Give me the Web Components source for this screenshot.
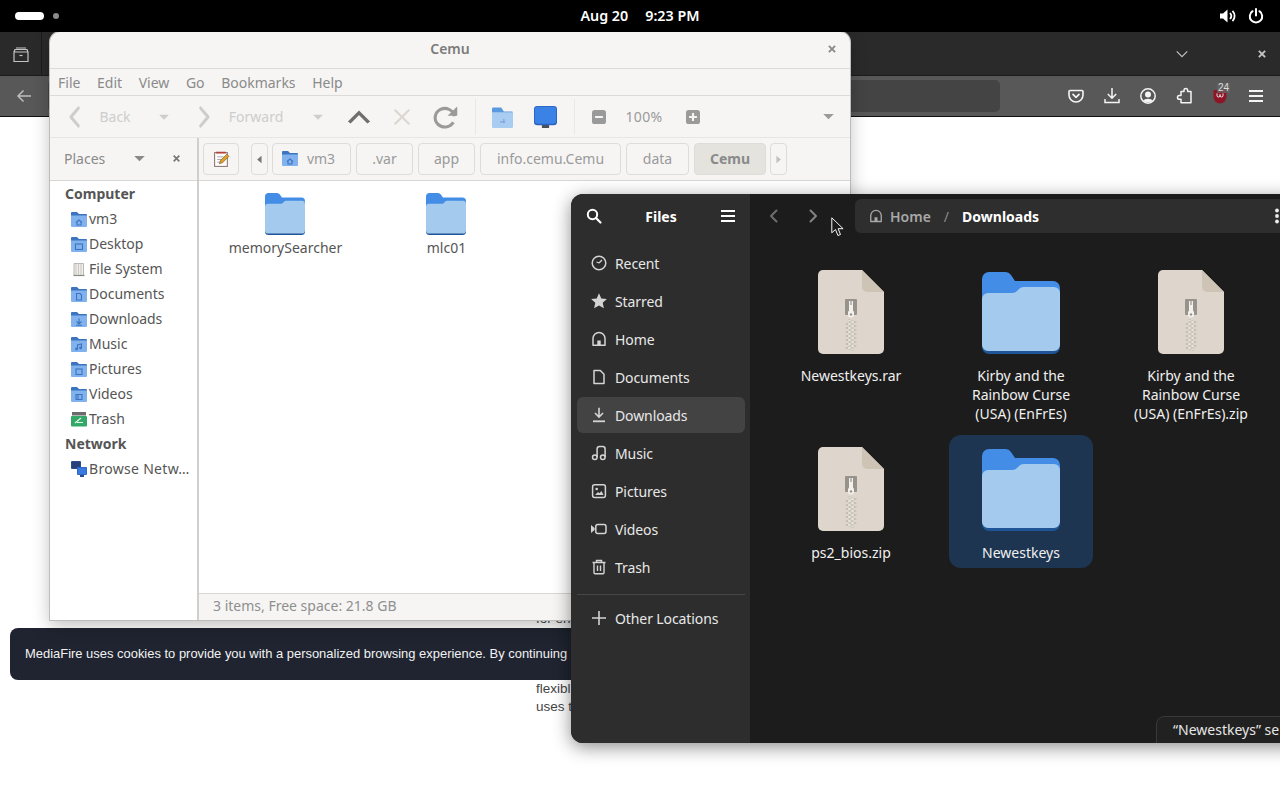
<!DOCTYPE html>
<html lang="en">
<head>
<meta charset="utf-8">
<title>Desktop</title>
<style>
	html, body {
		margin: 0;
		width: 1280px;
		height: 800px;
		overflow: hidden;
		background: #fff;
	}
	body {
		position: relative;
		font-family: "Noto Sans", "Open Sans", sans-serif;
	}
	gnome-topbar { position: absolute; left: 0; top: 0; z-index: 5; }
	browser-window { position: absolute; left: 0; top: 32px; z-index: 1; }
	caja-window { position: absolute; left: 50px; top: 32px; z-index: 2; }
	files-window { position: absolute; left: 571px; top: 194px; z-index: 3; }
	mouse-cursor { position: absolute; left: 831px; top: 217px; z-index: 4; }
</style>
</head>
<body>
	<gnome-topbar></gnome-topbar>

	<browser-window>
		<page-copy></page-copy>
		<cookie-banner>MediaFire uses cookies to provide you with a personalized browsing experience. By continuing</cookie-banner>
	</browser-window>

	<caja-window>
		<caja-place slot="places" head>Computer</caja-place>
		<caja-place slot="places" icon="c-home">vm3</caja-place>
		<caja-place slot="places" icon="c-desktop">Desktop</caja-place>
		<caja-place slot="places" icon="c-disk">File System</caja-place>
		<caja-place slot="places" icon="c-docs">Documents</caja-place>
		<caja-place slot="places" icon="c-down">Downloads</caja-place>
		<caja-place slot="places" icon="c-music">Music</caja-place>
		<caja-place slot="places" icon="c-pics">Pictures</caja-place>
		<caja-place slot="places" icon="c-video">Videos</caja-place>
		<caja-place slot="places" icon="c-trash">Trash</caja-place>
		<caja-place slot="places" head>Network</caja-place>
		<caja-place slot="places" icon="c-net" style="letter-spacing:.3px">Browse Netw…</caja-place>

		<path-crumb slot="crumbs" width="79" icon="c-home">vm3</path-crumb>
		<path-crumb slot="crumbs" width="57">.var</path-crumb>
		<path-crumb slot="crumbs" width="57">app</path-crumb>
		<path-crumb slot="crumbs" width="141">info.cemu.Cemu</path-crumb>
		<path-crumb slot="crumbs" width="63">data</path-crumb>
		<path-crumb slot="crumbs" width="72" active>Cemu</path-crumb>

		<caja-tile slot="files">memorySearcher</caja-tile>
		<caja-tile slot="files">mlc01</caja-tile>
	</caja-window>

	<files-window>
		<nav-row slot="nav" icon="recent">Recent</nav-row>
		<nav-row slot="nav" icon="star">Starred</nav-row>
		<nav-row slot="nav" icon="home">Home</nav-row>
		<nav-row slot="nav" icon="doc">Documents</nav-row>
		<nav-row slot="nav" icon="download" active>Downloads</nav-row>
		<nav-row slot="nav" icon="music">Music</nav-row>
		<nav-row slot="nav" icon="picture">Pictures</nav-row>
		<nav-row slot="nav" icon="video">Videos</nav-row>
		<nav-row slot="nav" icon="trash">Trash</nav-row>
		<nav-row slot="other" icon="plus">Other Locations</nav-row>

		<file-tile slot="files" kind="zip">Newestkeys.rar</file-tile>
		<file-tile slot="files" kind="folder">Kirby and the Rainbow Curse (USA) (EnFrEs)</file-tile>
		<file-tile slot="files" kind="zip">Kirby and the Rainbow Curse (USA) (EnFrEs).zip</file-tile>
		<file-tile slot="files" kind="zip">ps2_bios.zip</file-tile>
		<file-tile slot="files" kind="folder" selected>Newestkeys</file-tile>
	</files-window>

	<mouse-cursor></mouse-cursor>

<script>
const smallFolder = (emblem) => `
	<path fill="#3d74c0" d="M0 2a1 1 0 0 1 1-1h5l2 2h7a1 1 0 0 1 1 1v3H0z"/>
	<path fill="#82b2ee" d="M0 4.5h16V15a1 1 0 0 1-1 1H1a1 1 0 0 1-1-1z"/>
	<g fill="none" stroke="#3d74c0" stroke-width="1.1">${emblem}</g>`;

const ICONS = {
	search: '<circle cx="6.5" cy="6.5" r="4.7" fill="none" stroke="currentColor" stroke-width="2"/><path d="M10 10l4.5 4.5" stroke="currentColor" stroke-width="2.2" stroke-linecap="round"/>',
	menu: '<path d="M1 3h14M1 8h14M1 13h14" stroke="currentColor" stroke-width="2"/>',
	recent: '<circle cx="8" cy="8" r="6.8" fill="none" stroke="currentColor" stroke-width="1.5"/><path d="M8 8l3-3M8 8L5.5 7" stroke="currentColor" stroke-width="1.3"/>',
	star: '<path fill="currentColor" d="M8 .3l2.3 5.1 5.6.6-4.2 3.7 1.2 5.5L8 12.5l-4.9 2.7 1.2-5.5L.1 6l5.6-.6z"/>',
	home: '<path fill="none" stroke="currentColor" stroke-width="1.5" stroke-linejoin="round" d="M2 14.3V7.5a6 6 0 0 1 12 0v6.8z"/><path fill="currentColor" d="M6.3 14.5V9.5h3.4v5z"/>',
	doc: '<path fill="none" stroke="currentColor" stroke-width="1.5" stroke-linejoin="round" d="M3 1.5h6.3L13 5.3v9.2H3z"/>',
	download: '<path fill="none" stroke="currentColor" stroke-width="1.6" d="M8 .8v9M4 6l4 4 4-4"/><path d="M2 14.3h12" stroke="currentColor" stroke-width="1.8"/>',
	music: '<g fill="none" stroke="currentColor" stroke-width="1.5"><circle cx="3.8" cy="12.3" r="2.3"/><circle cx="11.8" cy="12.3" r="2.3"/><path d="M6.1 12V4a2.5 2.5 0 0 1 2.5-2.5h3A2.5 2.5 0 0 1 14.1 4v8"/></g>',
	picture: '<rect x="1.6" y="1.8" width="12.8" height="12.6" rx="2" fill="none" stroke="currentColor" stroke-width="1.5"/><circle cx="5.7" cy="6" r="1.3" fill="currentColor"/><path fill="currentColor" d="M4 12l3-3 1.5 1.2L10.5 8l2 4z"/>',
	video: '<rect x="4.8" y="3.5" width="10.2" height="9" rx="2" fill="none" stroke="currentColor" stroke-width="1.5"/><path fill="currentColor" d="M0 4v8l3.6-3v-2z"/>',
	trash: '<path fill="none" stroke="currentColor" stroke-width="1.4" d="M1.5 3.5h13M5.5 3.5V1.5h5v2M3 3.5v10.2a1 1 0 0 0 1 1h8a1 1 0 0 0 1-1V3.5M6.5 6.5v5.5M9.5 6.5v5.5"/>',
	plus: '<path d="M8 1v14M1 8h14" stroke="currentColor" stroke-width="1.6"/>',
	'chev-left': '<path fill="none" stroke="currentColor" stroke-width="2" stroke-linecap="round" stroke-linejoin="round" d="M10.5 2.5L5 8l5.5 5.5"/>',
	'chev-right': '<path fill="none" stroke="currentColor" stroke-width="2" stroke-linecap="round" stroke-linejoin="round" d="M5.5 2.5L11 8l-5.5 5.5"/>',
	'chev-up': '<path fill="none" stroke="currentColor" stroke-width="2.2" d="M2 12L8 5l6 7"/>',
	'chev-down': '<path fill="none" stroke="currentColor" stroke-width="1.3" d="M2 5l6 6 6-6"/>',
	close: '<path d="M3 3l10 10M13 3L3 13" stroke="currentColor" stroke-width="3"/>',
	'x-thin': '<path d="M1.5 1.5l13 13M14.5 1.5l-13 13" stroke="currentColor" stroke-width="1.8"/>',
	'tri-down': '<path fill="currentColor" d="M1.5 5h13L8 11.5z"/>',
	'tri-left': '<path fill="currentColor" d="M11 2.5v11L4.5 8z"/>',
	'tri-right': '<path fill="currentColor" d="M5 2.5v11L11.5 8z"/>',
	reload: '<path fill="none" stroke="currentColor" stroke-width="2" d="M13.7 7.5A6.2 6.2 0 1 0 13 11.5"/><path fill="currentColor" d="M9.3 7.2h6.2V1z"/>',
	'square-minus': '<rect x="0" y="0" width="16" height="16" rx="3" fill="currentColor"/><path d="M3.5 8h9" stroke="#f6f5f4" stroke-width="2.4"/>',
	'square-plus': '<rect x="0" y="0" width="16" height="16" rx="3" fill="currentColor"/><path d="M3.5 8h9M8 3.5v9" stroke="#f6f5f4" stroke-width="2.4"/>',
	'tool-folder': '<path fill="#5a98e0" d="M0 2a1 1 0 0 1 1-1h6l2 3h6a1 1 0 0 1 1 1v3H0z"/><path fill="#a9cdf1" d="M0 4.5h16V15a1 1 0 0 1-1 1H1a1 1 0 0 1-1-1z"/><path d="M6 11.5h4M9 9.5v3" stroke="#7ba6dc" stroke-width=".9" fill="none"/>',
	monitor: '<rect x="5.5" y="13.5" width="5" height="2.5" fill="#4a5058"/><rect x="0" y="0" width="16" height="14" rx="2.4" fill="#2a62bd"/><rect x=".6" y=".5" width="14.8" height="12.4" rx="2" fill="#3b82e6"/>',
	edit: '<rect x="1.5" y="1.5" width="12" height="13" fill="#fff" stroke="#8a7770" stroke-width="1"/><path d="M3 1.5h9" stroke="#b3413a" stroke-width="1.6"/><path d="M4 5.5h6M4 8h4M4 10.5h3" stroke="#999" stroke-width=".8"/><path d="M6 12l1-3 6-6 2 2-6 6z" fill="#dfa030" stroke="#7d5a20" stroke-width=".6"/>',
	'c-home': smallFolder('<path d="M5 11.5l3-2.5 3 2.5M6 11v3h4v-3"/>'),
	'c-desktop': smallFolder('<rect x="4.5" y="8" width="7" height="5.5"/>'),
	'c-docs': smallFolder('<path d="M5.5 7.5h3.5l1.5 1.5v5h-5z"/>'),
	'c-down': smallFolder('<path d="M8 7.5v5.5M5.5 10.5L8 13l2.5-2.5M5 14.2h6"/>'),
	'c-music': smallFolder('<path d="M6.5 13V9l4-1v4"/><circle cx="5.6" cy="13" r=".9"/><circle cx="9.6" cy="12" r=".9"/>'),
	'c-pics': smallFolder('<rect x="5" y="8" width="6" height="5.5"/>'),
	'c-video': smallFolder('<path d="M5 8.5h6v5H5zM7 8.5v5"/>'),
	'c-disk': '<path fill="#efeeeb" stroke="#a9a7a2" stroke-width=".8" d="M3 2.5h9.5v12H3z"/><path d="M5 3v11M7.5 3v11M10 3v11" stroke="#c9c7c2" stroke-width="1"/><path d="M2.5 14.5h11" stroke="#8b8a86" stroke-width="1.2"/>',
	'c-trash': '<rect x="1" y="1" width="14" height="3.5" fill="#6b6b6b"/><rect x="0" y="5" width="16" height="10.5" rx="1" fill="#33a866"/><path d="M4 12l6-5M6 11.5h6" stroke="#e8f6ee" stroke-width="1.1"/>',
	'c-net': '<rect x="0" y="0" width="10" height="8" rx="1" fill="#2c4b8c"/><rect x="1" y="1" width="8" height="6" fill="#27407a"/><rect x="6" y="6" width="10" height="8" rx="1" fill="#2e66c8"/><rect x="7" y="7" width="8" height="6" fill="#3a7ae0"/><rect x="9" y="14" width="4" height="2" fill="#2c4b8c"/>',
	'tab-box': '<path fill="none" stroke="currentColor" stroke-width="1.2" d="M1 5h14v9.5H1zM1 5l1-2.5h12L15 5M3 1h10"/><path d="M6.5 8.5h3" stroke="currentColor" stroke-width="1.2"/>',
	back: '<path fill="none" stroke="currentColor" stroke-width="1.5" d="M15 8H2M7.5 2.5L2 8l5.5 5.5"/>',
	pocket: '<path fill="none" stroke="currentColor" stroke-width="1.6" stroke-linejoin="round" d="M2 2.5h12a1 1 0 0 1 1 1V7A7 7 0 0 1 1 7V3.5a1 1 0 0 1 1-1z"/><path fill="none" stroke="currentColor" stroke-width="1.7" stroke-linecap="round" stroke-linejoin="round" d="M5 6.3l3 3 3-3"/>',
	tray: '<path fill="none" stroke="currentColor" stroke-width="1.5" d="M8 0v10M3.8 6L8 10.2 12.2 6M1 11v3.5h14V11"/>',
	account: '<circle cx="8" cy="8" r="7.2" fill="none" stroke="currentColor" stroke-width="1.5"/><circle cx="8" cy="6.4" r="3" fill="currentColor"/><path fill="currentColor" d="M3 12.5a6 4 0 0 1 10 0 7 7 0 0 1-10 0z"/>',
	puzzle: '<path fill="none" stroke="currentColor" stroke-width="1.5" stroke-linejoin="round" d="M6 3.5h2V2.2a1.8 1.8 0 0 1 3.6 0v1.3H15v11.2H5v-3.4H3.4a1.9 1.9 0 0 1 0-3.8H5V3.5z"/>',
	volume: '<path fill="currentColor" d="M0 5.5h3L7.5 1.5v13L3 10.5H0z"/><path fill="none" stroke="currentColor" stroke-width="1.8" d="M10 5a4.5 4.5 0 0 1 0 6M12.5 2.8a7.5 7.5 0 0 1 0 10.4"/>',
	power: '<path fill="none" stroke="currentColor" stroke-width="2" stroke-linecap="round" d="M8 1v6.5M4.6 3.2a6.2 6.2 0 1 0 6.8 0"/>',
	kebab: '<circle cx="8" cy="2.5" r="1.9" fill="currentColor"/><circle cx="8" cy="8" r="1.9" fill="currentColor"/><circle cx="8" cy="13.5" r="1.9" fill="currentColor"/>',
};

class AppIcon extends HTMLElement {
	connectedCallback() {
		if (this.shadowRoot) {
			return;
		}
		const name = this.getAttribute('name');
		const w = this.getAttribute('w') || 16;
		const h = this.getAttribute('h') || w;
		const shadow = this.attachShadow({ mode: 'open' });
		shadow.innerHTML = `
			<style>
				:host { display: inline-flex; flex: none; }
				svg { display: block; overflow: visible; }
			</style>
			<svg width="${w}" height="${h}" viewBox="0 0 16 16" preserveAspectRatio="none" aria-hidden="true">${ICONS[name] || ''}</svg>
		`;
	}
}

class GnomeTopbar extends HTMLElement {
	connectedCallback() {
		const shadow = this.attachShadow({ mode: 'open' });
		shadow.innerHTML = `
			<style>
				:host {
					display: grid;
					grid-template-columns: 1fr auto 1fr;
					align-items: center;
					width: 1280px;
					height: 32px;
					background: #000;
					color: #fff;
					font: 600 14.3px "Noto Sans", sans-serif;
				}
				.left { display: flex; align-items: center; gap: 9px; padding-left: 15px; }
				.pill { width: 29px; height: 8px; border-radius: 4px; background: #fff; }
				.dot { width: 6px; height: 6px; border-radius: 3px; background: #8c8c8c; }
				.clock { display: flex; gap: 17px; padding: 0 0 2px 0; }
				.right { display: flex; justify-content: flex-end; align-items: center; gap: 12px; padding-right: 16px; }
			</style>
			<div class="left"><span class="pill"></span><span class="dot"></span></div>
			<div class="clock"><span>Aug 20</span><span>9:23 PM</span></div>
			<div class="right"><app-icon name="volume"></app-icon><app-icon name="power"></app-icon></div>
		`;
	}
}

class BrowserWindow extends HTMLElement {
	connectedCallback() {
		const shadow = this.attachShadow({ mode: 'open' });
		shadow.innerHTML = `
			<style>
				:host {
					display: flex;
					flex-direction: column;
					width: 1280px;
					height: 768px;
					background: #fff;
				}
				.tabs {
					display: flex;
					align-items: center;
					height: 44px;
					background: #2b2a2b;
					color: #c4c4c4;
					box-sizing: border-box;
					border-bottom: 1px solid #1c1c1c;
				}
				.overview {
					display: flex;
					align-items: center;
					justify-content: center;
					width: 42px;
					height: 100%;
					padding-top: 3px;
					box-sizing: border-box;
					border-right: 1px solid #1c1c1c;
				}
				.fill { flex: 1; }
				.tabs .chev { margin-right: 68px; }
				.tabs .close { margin-right: 13px; }
				.bar {
					display: flex;
					align-items: center;
					height: 41px;
					padding: 0 16px;
					background: #585858;
					color: #f4f4f4;
					box-sizing: border-box;
					border-bottom: 1px solid #111;
				}
				.bar .arrow { color: #bdbdbd; }
				.url {
					flex: 1;
					height: 32px;
					margin: 0 68px 0 16px;
					border-radius: 5px;
					background: #444;
				}
				.actions { display: flex; align-items: center; gap: 20px; }
				.ublock { position: relative; display: block; width: 16px; height: 16px; }
				.badge {
					position: absolute;
					left: 5px;
					top: -5px;
					z-index: 1;
					padding: 0 1px;
					font: 10px/10px "Liberation Sans", sans-serif;
					color: #ddd;
					background: rgba(100,100,100,.75);
				}
				.shield { display: block; overflow: visible; margin-top: 1px; }
				.content { flex: 1; position: relative; }
			</style>
			<div class="tabs">
				<div class="overview"><app-icon name="tab-box"></app-icon></div>
				<div class="fill"></div>
				<app-icon class="chev" name="chev-down" w="14" h="14"></app-icon>
				<app-icon class="close" name="close" w="10" h="10"></app-icon>
			</div>
			<div class="bar">
				<app-icon class="arrow" name="back"></app-icon>
				<div class="url"></div>
				<div class="actions">
					<app-icon name="pocket"></app-icon>
					<app-icon name="tray"></app-icon>
					<app-icon name="account"></app-icon>
					<app-icon name="puzzle"></app-icon>
					<span class="ublock">
						<span class="badge">24</span>
						<svg class="shield" width="16" height="15" viewBox="0 0 16 15" aria-hidden="true">
							<path fill="#8e1526" d="M1.5 1h13v6.5a6.5 7 0 0 1-13 0z"/>
							<path fill="none" stroke="#eee" stroke-width="1" d="M5 4.5v2a1.5 1.5 0 0 0 3 0v-1 1a1.5 1.5 0 0 0 3 0v-2"/>
						</svg>
					</span>
					<app-icon name="menu"></app-icon>
				</div>
			</div>
			<div class="content"><slot></slot></div>
		`;
	}
}

class PageCopy extends HTMLElement {
	connectedCallback() {
		const shadow = this.attachShadow({ mode: 'open' });
		shadow.innerHTML = `
			<style>
				:host {
					display: block;
					padding: 493px 0 0 536px;
					font: 13.5px/18px "Liberation Sans", Arial, sans-serif;
					color: #444;
				}
				p { margin: 0; }
				.next { margin-top: 52px; }
			</style>
			<p>for en</p>
			<p class="next">flexibl</p>
			<p>uses t</p>
		`;
	}
}

class CookieBanner extends HTMLElement {
	connectedCallback() {
		const shadow = this.attachShadow({ mode: 'open' });
		shadow.innerHTML = `
			<style>
				:host {
					position: absolute;
					left: 10px;
					top: 511px;
					display: flex;
					align-items: center;
					box-sizing: border-box;
					width: 600px;
					height: 52px;
					padding: 0 0 2px 15px;
					border-radius: 8px;
					background: #1f2430;
					color: #f2f2f2;
					font: 12.95px "Liberation Sans", Arial, sans-serif;
					white-space: nowrap;
				}
			</style>
			<slot></slot>
		`;
	}
}

class CajaWindow extends HTMLElement {
	connectedCallback() {
		const shadow = this.attachShadow({ mode: 'open' });
		shadow.innerHTML = `
			<style>
				:host {
					display: flex;
					flex-direction: column;
					box-sizing: border-box;
					width: 800px;
					height: 588px;
					border-radius: 10px 10px 0 0;
					background: #f6f5f4;
					box-shadow: 0 0 0 1px #bdbdbb, 0 6px 18px rgba(0,0,0,.25);
					font: 14px "Noto Sans", sans-serif;
					color: #6f6f6f;
					overflow: hidden;
				}
				.title {
					display: grid;
					grid-template-columns: 1fr auto 1fr;
					align-items: center;
					height: 37px;
					flex: none;
					padding-bottom: 3px;
					box-sizing: border-box;
					border-bottom: 1px solid #dcdbd8;
					font-weight: 600;
					color: #7b7b7b;
				}
				.title app-icon { justify-self: end; margin-right: 13px; color: #8a8a8a; }
				.menu {
					display: flex;
					gap: 16.6px;
					align-items: center;
					height: 27px;
					flex: none;
					box-sizing: border-box;
					padding-left: 8px;
					border-bottom: 1px solid #dcdbd8;
					color: #8a8a8a;
				}
				.tools {
					display: grid;
					grid-template-columns: 34px 46px 52px 28px 76px 48px 34px 52px 34px 26px 28px 58px 1px 48px 42px 55px 1fr 24px;
					justify-items: center;
					align-items: center;
					height: 41px;
					flex: none;
					padding: 0 10px 0 8px;
					color: #c2c2c2;
				}
				.sep { width: 1px; height: 36px; background: #e9e8e5; }
				.dim { color: #cdcdcd; }
				.warm { color: #dcd6cf; }
				.mid { color: #9a9a9a; }
				.pct { color: #9a9a9a; letter-spacing: .3px; }
				.dark { color: #6f6f6f; }
				.main { flex: 1; display: flex; min-height: 0; border-top: 1px solid #e7e6e3; }
				.side { width: 147px; flex: none; display: flex; flex-direction: column; border-right: 2px solid #cfcfcd; }
				.places {
					display: flex;
					align-items: center;
					height: 43px;
					flex: none;
					box-sizing: border-box;
					padding: 0 0 2px 14px;
					border-bottom: 1px solid #d8d7d4;
					color: #8a8a8a;
				}
				.places span { width: 69px; }
				.places .cross { margin-left: 26px; color: #777; }
				.tree { flex: 1; background: #fff; }
				.right { flex: 1; display: flex; flex-direction: column; min-width: 0; }
				.crumbs {
					display: flex;
					align-items: center;
					gap: 5px;
					height: 43px;
					flex: none;
					box-sizing: border-box;
					padding-left: 4px;
					border-bottom: 1px solid #d8d7d4;
				}
				.nub {
					display: flex;
					align-items: center;
					justify-content: center;
					box-sizing: border-box;
					width: 17px;
					height: 32px;
					border: 1px solid #dedcd9;
					border-radius: 4px;
					color: #777;
				}
				.nub.end { color: #c0c0c0; margin-left: -1px; }
				.nub.start { margin-right: -1px; }
				.editbtn {
					display: flex;
					align-items: center;
					justify-content: center;
					box-sizing: border-box;
					width: 36px;
					height: 32px;
					margin-right: 7px;
					border: 1px solid #dedcd9;
					border-radius: 4px;
				}
				.view {
					flex: 1;
					display: grid;
					grid-template-columns: repeat(auto-fill, 161px);
					grid-auto-rows: max-content;
					padding: 12px 6px;
					background: #fff;
				}
				.status {
					display: flex;
					align-items: center;
					height: 27px;
					flex: none;
					box-sizing: border-box;
					padding: 0 0 3px 14px;
					border-top: 1px solid #d8d7d4;
					color: #8f8f8f;
				}
			</style>
			<div class="title">
				<span></span><span>Cemu</span>
				<app-icon name="close" w="10" h="10"></app-icon>
			</div>
			<div class="menu"><span>File</span><span>Edit</span><span>View</span><span>Go</span><span>Bookmarks</span><span>Help</span></div>
			<div class="tools">
				<app-icon class="dim" name="chev-left" w="22" h="26"></app-icon>
				<span class="dim">Back</span>
				<app-icon class="dim" name="tri-down" w="12" h="12"></app-icon>
				<app-icon class="dim" name="chev-right" w="22" h="26"></app-icon>
				<span class="dim">Forward</span>
				<app-icon class="dim" name="tri-down" w="12" h="12"></app-icon>
				<app-icon class="dark" name="chev-up" w="26" h="22"></app-icon>
				<app-icon class="warm" name="x-thin" w="18" h="18"></app-icon>
				<app-icon class="mid" name="reload" w="25" h="24"></app-icon>
				<span class="sep"></span>
				<app-icon name="tool-folder" w="21" h="22"></app-icon>
				<app-icon name="monitor" w="23" h="22"></app-icon>
				<span class="sep"></span>
				<app-icon class="mid" name="square-minus" w="14" h="14"></app-icon>
				<span class="pct">100%</span>
				<app-icon class="mid" name="square-plus" w="14" h="14"></app-icon>
				<span></span>
				<app-icon class="mid" name="tri-down" w="13" h="13"></app-icon>
			</div>
			<div class="main">
				<div class="side">
					<div class="places">
						<span>Places</span>
						<app-icon name="tri-down" w="13" h="13"></app-icon>
						<app-icon class="cross" name="close" w="9" h="9"></app-icon>
					</div>
					<div class="tree"><slot name="places"></slot></div>
				</div>
				<div class="right">
					<div class="crumbs">
						<span class="editbtn"><app-icon name="edit" w="17" h="17"></app-icon></span>
						<span class="nub start"><app-icon name="tri-left" w="11" h="11"></app-icon></span>
						<slot name="crumbs"></slot>
						<span class="nub end"><app-icon name="tri-right" w="11" h="11"></app-icon></span>
					</div>
					<div class="view"><slot name="files"></slot></div>
					<div class="status">3 items, Free space: 21.8 GB</div>
				</div>
			</div>
		`;
	}
}

class CajaPlace extends HTMLElement {
	connectedCallback() {
		const icon = this.getAttribute('icon');
		const shadow = this.attachShadow({ mode: 'open' });
		shadow.innerHTML = `
			<style>
				:host {
					display: flex;
					align-items: center;
					gap: 2px;
					height: 25px;
					padding-left: ${icon ? 21 : 15}px;
					color: #555;
					font-weight: ${icon ? 400 : 700};
					white-space: nowrap;
				}
			</style>
			${icon ? `<app-icon name="${icon}"></app-icon>` : ''}
			<slot></slot>
		`;
	}
}

class PathCrumb extends HTMLElement {
	connectedCallback() {
		const icon = this.getAttribute('icon');
		const shadow = this.attachShadow({ mode: 'open' });
		shadow.innerHTML = `
			<style>
				:host {
					display: flex;
					align-items: center;
					justify-content: center;
					gap: 9px;
					box-sizing: border-box;
					width: ${this.getAttribute('width')}px;
					height: 32px;
					padding-right: ${icon ? 6 : 0}px;
					padding-bottom: 2px;
					border: 1px solid #dedcd9;
					border-radius: 4px;
					color: #9a9a9a;
				}
				:host([active]) {
					background: #e4e3de;
					font-weight: 700;
					color: #8a8a8a;
				}
			</style>
			${icon ? `<app-icon name="${icon}"></app-icon>` : ''}
			<slot></slot>
		`;
	}
}

class CajaTile extends HTMLElement {
	connectedCallback() {
		const shadow = this.attachShadow({ mode: 'open' });
		shadow.innerHTML = `
			<style>
				:host {
					display: flex;
					flex-direction: column;
					align-items: center;
					gap: 3px;
					color: #555;
				}
				folder-art { margin-right: 2px; }
			</style>
			<folder-art w="40" h="42"></folder-art>
			<slot></slot>
		`;
	}
}

class FolderArt extends HTMLElement {
	connectedCallback() {
		const shadow = this.attachShadow({ mode: 'open' });
		shadow.innerHTML = `
			<style>
				:host { display: block; flex: none; }
				svg { display: block; }
			</style>
			<svg width="${this.getAttribute('w')}" height="${this.getAttribute('h')}" viewBox="0 0 78 82" aria-hidden="true">
				<path fill="#1f5596" d="M0 60h78v15a7 7 0 0 1-7 7H7a7 7 0 0 1-7-7z"/>
				<path fill="#438de6" d="M0 7a7 7 0 0 1 7-7h16a7 7 0 0 1 6 3l4 6h38a7 7 0 0 1 7 7v40H0z"/>
				<path fill="#a4caee" d="M0 27a6 6 0 0 1 6-6h24c3 0 4-1 6-3s3-3 6-3h30a6 6 0 0 1 6 6v52a6 6 0 0 1-6 6H6a6 6 0 0 1-6-6z"/>
			</svg>
		`;
	}
}

class ZipArt extends HTMLElement {
	connectedCallback() {
		const shadow = this.attachShadow({ mode: 'open' });
		shadow.innerHTML = `
			<style>
				:host { display: block; flex: none; }
				svg { display: block; }
			</style>
			<svg width="66" height="84" viewBox="0 0 66 84" aria-hidden="true">
				<path fill="#ded6cc" d="M5 0h39l22 22v57a5 5 0 0 1-5 5H5a5 5 0 0 1-5-5V5a5 5 0 0 1 5-5z"/>
				<path fill="#cdc4b6" d="M44 0l22 22H49a5 5 0 0 1-5-5z"/>
				<rect x="27" y="29" width="12" height="16" rx="1" fill="#97928c"/>
				<path fill="#f4f1ec" d="M31 31h1.4v4h1.2v-4H35v9.5l1 1.5v2.5a3 3 0 0 1-6 0V42l1-1.5z"/>
				<circle cx="33" cy="44.5" r="1.2" fill="#97928c"/>
				<path fill="none" stroke="#bdb7ab" stroke-width="2" d="M30 50l6 2-6 2 6 2-6 2 6 2-6 2 6 2-6 2 6 2-6 2 6 2-6 2 6 2-6 2 6 2"/>
				<path fill="none" stroke="#eeeae3" stroke-width=".9" d="M30 50l6 2-6 2 6 2-6 2 6 2-6 2 6 2-6 2 6 2-6 2 6 2-6 2 6 2-6 2 6 2"/>
			</svg>
		`;
	}
}

class FilesWindow extends HTMLElement {
	connectedCallback() {
		const shadow = this.attachShadow({ mode: 'open' });
		shadow.innerHTML = `
			<style>
				:host {
					display: flex;
					width: 760px;
					height: 549px;
					border-radius: 12px;
					overflow: hidden;
					background: #1c1c1c;
					box-shadow: 0 4px 18px rgba(0,0,0,.45);
					font: 14px "Noto Sans", sans-serif;
					color: #eee;
				}
				.side { width: 179px; flex: none; background: #2d2d2d; display: flex; flex-direction: column; }
				.head { display: flex; align-items: center; height: 44px; flex: none; }
				.side .head { justify-content: space-between; padding: 0 14px 0 15px; font-weight: 700; color: #fff; }
				.list { padding: 7px 5px 0 6px; }
				.rule { height: 1px; margin: 7px 5px 5px 6px; background: #474747; }
				.main { flex: 1; position: relative; min-width: 0; }
				.main .head { padding: 0 0 0 16px; }
				.nav { color: #6e6e6e; }
				.nav.f { margin-left: 23px; color: #828282; }
				.path {
					display: flex;
					align-items: center;
					width: 440px;
					height: 34px;
					margin-left: 34px;
					padding: 0 10px 0 14px;
					box-sizing: border-box;
					border-radius: 6px;
					background: #2e2e2e;
				}
				.path .home { margin-left: 7px; color: #a8a8a8; font-weight: 600; }
				.path .slash { margin: 0 13px; color: #8a8a8a; }
				.path .here { font-weight: 700; color: #fff; }
				.path app-icon { color: #a8a8a8; }
				.path .kebab { margin-left: auto; color: #eee; }
				.grid {
					display: grid;
					grid-template-columns: repeat(3, 170px);
					row-gap: 6px;
					padding: 20px 0 0 16px;
				}
				.toast {
					position: absolute;
					left: 406px;
					top: 522px;
					width: 400px;
					height: 60px;
					box-sizing: border-box;
					padding: 3px 0 0 16px;
					border: 1px solid #383838;
					border-radius: 8px;
					background: #212121;
					color: #e6e6e6;
					white-space: nowrap;
				}
			</style>
			<div class="side">
				<div class="head">
					<app-icon name="search"></app-icon>
					<span>Files</span>
					<app-icon name="menu"></app-icon>
				</div>
				<div class="list"><slot name="nav"></slot></div>
				<div class="rule"></div>
				<div class="list" style="padding-top:0"><slot name="other"></slot></div>
			</div>
			<div class="main">
				<div class="head">
					<app-icon class="nav" name="chev-left"></app-icon>
					<app-icon class="nav f" name="chev-right"></app-icon>
					<div class="path">
						<app-icon name="home" w="14" h="14"></app-icon>
						<span class="home">Home</span>
						<span class="slash">/</span>
						<span class="here">Downloads</span>
						<app-icon class="kebab" name="kebab"></app-icon>
					</div>
				</div>
				<div class="grid"><slot name="files"></slot></div>
				<div class="toast">“Newestkeys” se</div>
			</div>
		`;
	}
}

class NavRow extends HTMLElement {
	connectedCallback() {
		const shadow = this.attachShadow({ mode: 'open' });
		shadow.innerHTML = `
			<style>
				:host {
					display: flex;
					align-items: center;
					gap: 8px;
					height: 36px;
					margin-bottom: 2px;
					padding-left: 14px;
					border-radius: 6px;
					color: #e8e8e8;
					letter-spacing: -.1px;
				}
				:host([active]) { background: #434343; }
				app-icon { color: #d4d4d4; }
			</style>
			<app-icon name="${this.getAttribute('icon')}"></app-icon>
			<slot></slot>
		`;
	}
}

class FileTile extends HTMLElement {
	connectedCallback() {
		const art = this.getAttribute('kind') === 'zip'
			? '<zip-art></zip-art>'
			: '<folder-art w="78" h="82"></folder-art>';
		const shadow = this.attachShadow({ mode: 'open' });
		shadow.innerHTML = `
			<style>
				:host {
					display: block;
					box-sizing: border-box;
					width: 144px;
					margin: 0 13px;
					padding: 12px 12px 6px;
					border-radius: 12px;
					text-align: center;
					color: #f0f0f0;
					line-height: 19px;
				}
				:host([selected]) { background: #1d3550; }
				.art { display: flex; justify-content: center; align-items: flex-end; height: 84px; margin-bottom: 12px; }
			</style>
			<div class="art">${art}</div>
			<slot></slot>
		`;
	}
}

class MouseCursor extends HTMLElement {
	connectedCallback() {
		const shadow = this.attachShadow({ mode: 'open' });
		shadow.innerHTML = `
			<style>
				:host { display: block; width: 13px; height: 21px; }
				svg { display: block; }
			</style>
			<svg width="13" height="21" viewBox="0 0 13 21" aria-hidden="true">
				<path fill="#1a1a1a" stroke="#f5f5f5" stroke-width="1" d="M.8.8v15l3.7-3.3 2.4 6 2.6-1-2.4-5.8 5 0z"/>
			</svg>
		`;
	}
}

const elements = {
	'app-icon': AppIcon,
	'gnome-topbar': GnomeTopbar,
	'browser-window': BrowserWindow,
	'page-copy': PageCopy,
	'cookie-banner': CookieBanner,
	'caja-window': CajaWindow,
	'caja-place': CajaPlace,
	'path-crumb': PathCrumb,
	'caja-tile': CajaTile,
	'folder-art': FolderArt,
	'zip-art': ZipArt,
	'files-window': FilesWindow,
	'nav-row': NavRow,
	'file-tile': FileTile,
	'mouse-cursor': MouseCursor,
};

for (const [name, cls] of Object.entries(elements)) {
	customElements.define(name, cls);
}
</script>
</body>
</html>
